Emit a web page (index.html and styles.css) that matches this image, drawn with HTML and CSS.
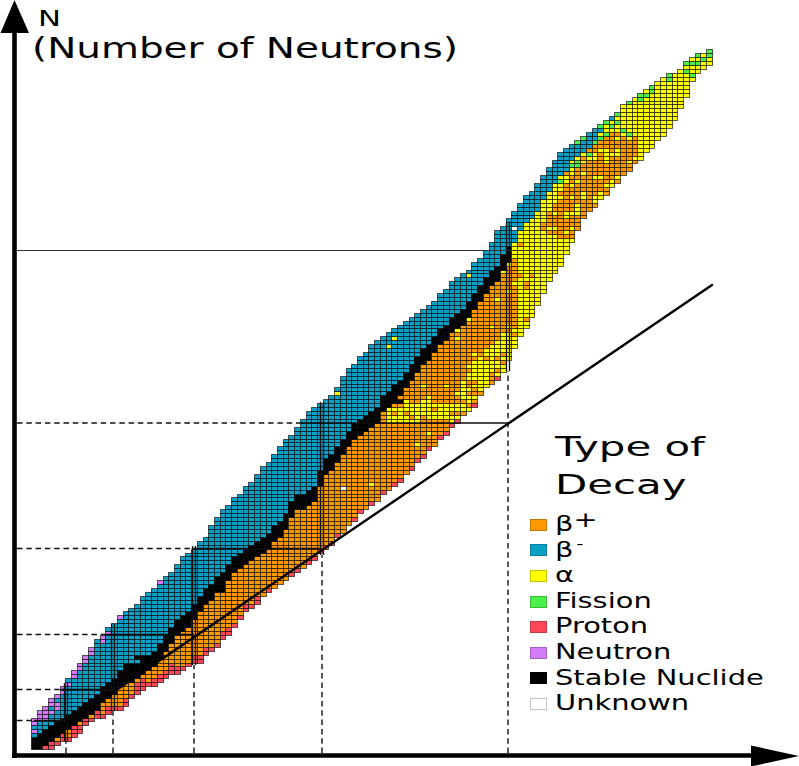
FILE: index.html
```html
<!DOCTYPE html>
<html lang="en">
<head>
<meta charset="utf-8">
<title>Chart of nuclides – Type of Decay</title>
<link rel="stylesheet" href="styles.css">
</head>
<body>
<div class="figure">
  <svg class="chart" width="799" height="766" viewBox="0 0 799 766">
    <g id="cells"></g>

    <g class="magic">
      <line class="dash" x1="66" y1="753" x2="66" y2="741"/>
      <line class="solid" x1="64.5" y1="741" x2="64.5" y2="683"/>
      <line class="solid" x1="67.5" y1="741" x2="67.5" y2="683"/>
      <line class="dash" x1="113" y1="753" x2="113" y2="711"/>
      <line class="solid" x1="111.5" y1="711" x2="111.5" y2="624"/>
      <line class="solid" x1="114.5" y1="711" x2="114.5" y2="624"/>
      <line class="dash" x1="194" y1="753" x2="194" y2="665"/>
      <line class="solid" x1="192.5" y1="665" x2="192.5" y2="546"/>
      <line class="solid" x1="195.5" y1="665" x2="195.5" y2="546"/>
      <line class="dash" x1="322" y1="753" x2="322" y2="555"/>
      <line class="solid" x1="320.5" y1="555" x2="320.5" y2="402"/>
      <line class="solid" x1="323.5" y1="555" x2="323.5" y2="402"/>
      <line class="dash" x1="508" y1="753" x2="508" y2="371"/>
      <line class="solid" x1="506.5" y1="371" x2="506.5" y2="222"/>
      <line class="solid" x1="509.5" y1="371" x2="509.5" y2="222"/>

      <line class="dash" x1="17" y1="720.5" x2="34" y2="720.5"/>
      <line class="solid" x1="34" y1="720.5" x2="66" y2="720.5"/>
      <line class="dash" x1="17" y1="689.5" x2="61" y2="689.5"/>
      <line class="solid" x1="61" y1="689.5" x2="113" y2="689.5"/>
      <line class="dash" x1="17" y1="634.5" x2="103" y2="634.5"/>
      <line class="solid" x1="103" y1="634.5" x2="194" y2="634.5"/>
      <line class="dash" x1="17" y1="548.5" x2="193" y2="548.5"/>
      <line class="solid" x1="193" y1="548.5" x2="322" y2="548.5"/>
      <line class="dash" x1="17" y1="423" x2="301" y2="423"/>
      <line class="solid" x1="301" y1="423" x2="508" y2="423"/>
      <line class="thin" x1="17" y1="250.5" x2="568" y2="250.5"/>
    </g>

    <line class="diag" x1="34" y1="746" x2="712" y2="285"/>

    <line class="axis" x1="14.5" y1="30" x2="14.5" y2="758"/>
    <polygon class="arrow" points="0.5,33 14.5,0 29,33"/>
    <line class="axis" x1="12" y1="755.5" x2="754" y2="755.5"/>
    <polygon class="arrow" points="751,745.5 799,756 751,766.5"/>

    <text class="axis-n" x="38" y="26" textLength="23" lengthAdjust="spacingAndGlyphs">N</text>
    <text class="axis-title" x="32" y="57.5" textLength="426" lengthAdjust="spacingAndGlyphs">(Number of Neutrons)</text>
  </svg>

  <div class="legend">
    <div class="legend-title">
      <span class="title-line">Type of</span>
      <span class="title-line">Decay</span>
    </div>
    <ul class="legend-list">
      <li class="legend-item"><i class="swatch sw-bplus"></i><span class="label">β<span class="sup-plus">+</span></span></li>
      <li class="legend-item"><i class="swatch sw-bminus"></i><span class="label">β<span class="sup-minus">-</span></span></li>
      <li class="legend-item"><i class="swatch sw-alpha"></i><span class="label">α</span></li>
      <li class="legend-item"><i class="swatch sw-fission"></i><span class="label">Fission</span></li>
      <li class="legend-item"><i class="swatch sw-proton"></i><span class="label">Proton</span></li>
      <li class="legend-item"><i class="swatch sw-neutron"></i><span class="label">Neutron</span></li>
      <li class="legend-item"><i class="swatch sw-stable"></i><span class="label">Stable Nuclide</span></li>
      <li class="legend-item"><i class="swatch sw-unknown"></i><span class="label">Unknown</span></li>
    </ul>
  </div>
</div>
<script src="script.js"></script>
</body>
</html>
```

FILE: styles.css
```css
html, body {
  margin: 0;
  padding: 0;
  background: #ffffff;
}

body {
  width: 799px;
  height: 766px;
  overflow: hidden;
  font-family: "DejaVu Sans", "Liberation Sans", sans-serif;
  color: #000;
}

.figure {
  position: relative;
  width: 799px;
  height: 766px;
}

.chart {
  display: block;
}

.cell {
  stroke: rgba(0, 0, 0, 0.62);
  stroke-width: 1;
}

.dash {
  stroke: #111;
  stroke-width: 1.4;
  stroke-dasharray: 5.5 3.8;
}

.solid {
  stroke: #0d0d0d;
  stroke-width: 1.3;
}

.thin {
  stroke: #333;
  stroke-width: 1.1;
}

.diag {
  stroke: #000;
  stroke-width: 2.4;
  stroke-linecap: round;
}

.axis {
  stroke: #000;
  stroke-width: 4.6;
}

.arrow {
  fill: #000;
}

.axis-n {
  font-family: "DejaVu Sans", sans-serif;
  font-size: 22px;
  fill: #000;
}

.axis-title {
  font-family: "DejaVu Sans", sans-serif;
  font-size: 27.5px;
  fill: #000;
}

/* legend */
.legend {
  position: absolute;
  left: 530px;
  top: 428px;
}

.legend-title {
  display: flex;
  flex-direction: column;
  align-items: flex-start;
  padding-left: 25px;
}

.title-line {
  display: inline-block;
  font-size: 26.5px;
  line-height: 38px;
  white-space: nowrap;
  transform: scaleX(1.58);
  transform-origin: 0 50%;
}

.legend-list {
  list-style: none;
  margin: 8px 0 0;
  padding: 0;
  display: flex;
  flex-direction: column;
}

.legend-item {
  display: flex;
  align-items: center;
  height: 25.6px;
}

.swatch {
  display: block;
  width: 17px;
  height: 12px;
  box-sizing: border-box;
  border: 1px solid rgba(0, 0, 0, 0.22);
  margin-right: 8px;
  flex: none;
}

.sw-bplus { background: #ff9900; }
.sw-bminus { background: #0aa0c8; }
.sw-alpha { background: #ffff00; }
.sw-fission { background: #4cf04c; }
.sw-proton { background: #ff4757; }
.sw-neutron { background: #d47cf7; }
.sw-stable { background: #000000; border-color: #000; }
.sw-unknown { background: #ffffff; border-color: #c4c4c4; }

.label {
  display: inline-block;
  font-size: 20.5px;
  line-height: 25.6px;
  white-space: nowrap;
  transform: scaleX(1.41);
  transform-origin: 0 50%;
}

.sup-plus {
  vertical-align: 4.5px;
  line-height: 0;
}

.sup-minus {
  font-size: 14px;
  vertical-align: 8px;
  line-height: 0;
  margin-left: 2px;
}
```

FILE: script.js
```js
(function () {
  var NS = 'http://www.w3.org/2000/svg';
  var layer = document.getElementById('cells');
  var CW = 5.72, CH = 3.93, X0 = 31, Y0 = 749, COLS = 119;
  var COL = { B: '#0aa0c8', O: '#ff9900', Y: '#ffff00', G: '#4cf04c', R: '#ff4757', P: '#d47cf7', K: '#000000', W: '#ffffff' };

  var topPts = [[30,735],[35,713],[53,697],[60,688],[73,672],[87,652],[98,638],[112,625],[123,613],[137,603],[157,583],[173,570],[187,553],[197,545],[207,533],[220,512],[243,490],[267,462],[280,448],[302,418],[320,403],[327,400],[350,367],[370,347],[397,327],[420,310],[437,297],[453,280],[470,267],[487,250],[493,237],[510,217],[523,200],[560,153],[577,140],[593,127],[610,117],[627,103],[647,90],[660,80],[677,70],[697,53],[712,50]];
  var botPts = [[30,749],[47,749],[67,741],[97,718],[117,710],[147,688],[167,677],[197,663],[227,637],[248,610],[273,587],[295,572],[317,557],[337,537],[353,520],[367,510],[377,500],[400,480],[423,457],[437,443],[450,428],[458,420],[473,407],[480,397],[487,387],[497,380],[507,367],[512,350],[523,333],[540,300],[550,280],[560,267],[570,247],[583,217],[600,200],[627,173],[647,150],[667,133],[685,100],[693,77],[712,65]];
  var stabPts = [[33,744],[67,722],[90,705],[113,683],[127,673],[150,660],[160,647],[173,630],[187,617],[197,605],[213,587],[237,560],[257,547],[277,530],[297,500],[313,493],[323,467],[337,453],[350,433],[373,417],[387,397],[407,377],[420,357],[437,340],[453,320],[467,310],[477,293],[500,267],[508,250]];
  var blob = [[538,228],[552,205],[572,172],[594,142],[612,128],[636,138],[634,172],[616,200],[592,222],[566,240]];
  var yel = [[383,420],[392,398],[420,400],[452,404],[466,372],[482,352],[500,336],[514,318],[520,345],[508,372],[492,390],[472,410],[456,421],[422,420],[400,424]];
  var nbPts = [[508,9],[530,7],[560,6],[590,4],[605,2],[616,1],[622,0]];
  var blackRuns = [[123,143,665],[133,150,657],[210,224,588],[297,313,500],[390,403,392],[390,403,400]];
  var whiteCells = [[345,489],[512,228]];

  function interp(p, x) {
    if (x <= p[0][0]) return p[0][1];
    for (var k = 1; k < p.length; k++) {
      if (x <= p[k][0]) {
        var a = p[k - 1], b = p[k];
        return a[1] + (b[1] - a[1]) * (x - a[0]) / (b[0] - a[0]);
      }
    }
    return p[p.length - 1][1];
  }

  function inPoly(p, x, y) {
    var inside = false;
    for (var a = 0, b = p.length - 1; a < p.length; b = a++) {
      var xi = p[a][0], yi = p[a][1], xj = p[b][0], yj = p[b][1];
      if (((yi > y) !== (yj > y)) && (x < (xj - xi) * (y - yi) / (yj - yi) + xi)) inside = !inside;
    }
    return inside;
  }

  function rnd(i, j, s) {
    var h = Math.imul(i + 11, 73856093) ^ Math.imul(j + 7, 19349663) ^ Math.imul(s + 3, 83492791);
    h = Math.imul(h ^ (h >>> 15), 2246822519);
    h = Math.imul(h ^ (h >>> 13), 3266489917);
    h ^= h >>> 16;
    return (h >>> 0) / 4294967296;
  }

  function pick(i, j, xc, yc, jTop, jBot, sLo, sHi, heavy) {
    var r = rnd(i, j, 1), r2 = rnd(i, j, 2);
    var ft = jTop - j, fb = j - jBot;
    for (var w = 0; w < whiteCells.length; w++) {
      if (Math.abs(xc - whiteCells[w][0]) < 2.9 && Math.abs(yc - whiteCells[w][1]) < 2) return 'W';
    }
    if (!heavy) {
      if (j >= sLo && j <= sHi) return 'K';
      for (var b = 0; b < blackRuns.length; b++) {
        var br = blackRuns[b];
        if (xc >= br[0] && xc <= br[1] && Math.abs(yc - br[2]) < 2) return 'K';
      }
      if (j > sHi) {
        if (xc < 60 && ft <= 3 && r < 0.7) return 'P';
        if (xc < 112 && ft <= 1 && r < 0.75) return 'P';
        if (xc < 160 && ft === 0 && r < 0.4) return 'P';
        if (xc > 330 && r2 < 0.012) return 'Y';
        return 'B';
      }
      if (xc < 262) {
        if (fb === 0) return 'R';
        if (fb === 1 && r < (xc < 215 ? 0.75 : 0.5)) return 'R';
        if (fb === 2 && xc < 180 && r < 0.3) return 'R';
      } else if (fb === 0 && r < (xc < 380 ? 0.5 : 0.55)) {
        return 'R';
      }
      if (xc > 380 && inPoly(yel, xc, yc) && r2 < 0.8) return 'Y';
      if (xc > 440 && j === sLo - 1 && r2 < 0.35) return 'Y';
      if (xc > 370 && r2 < 0.04) return 'Y';
      return 'O';
    }
    var nb = Math.round(interp(nbPts, xc));
    if (ft < nb) {
      if (xc > 575 && ft === 0 && r < 0.45) return 'G';
      if (ft === nb - 1 && r < 0.3) return 'Y';
      return 'B';
    }
    if (xc > 575 && ft < nb + 2 && r < 0.45) return 'G';
    if (xc < 520 && yc > 256 && fb >= 3) return r2 < 0.12 ? 'Y' : 'O';
    if (inPoly(blob, xc, yc)) return r2 < 0.78 ? 'O' : 'Y';
    if (xc > 560 && r < 0.07) return 'G';
    if (xc < 660 && r2 < 0.035) return 'O';
    return 'Y';
  }

  var frag = document.createDocumentFragment();
  for (var i = 0; i < COLS; i++) {
    var xl = X0 + i * CW, xc = xl + CW / 2;
    var xa = Math.round(xl), xb = Math.round(xl + CW);
    var jTop = Math.round((Y0 - interp(topPts, xc)) / CH) - 1;
    var jBot = Math.max(0, Math.round((Y0 - interp(botPts, xc)) / CH));
    if (jTop < jBot) jTop = jBot;
    var heavy = xc > 509;
    var sLo = -10, sHi = -20;
    if (!heavy) {
      var js = Math.round((Y0 - interp(stabPts, xc)) / CH - 0.5);
      sLo = js - 2;
      sHi = js + 1;
    }
    for (var j = jBot; j <= jTop; j++) {
      var yt = Y0 - (j + 1) * CH, yc = yt + CH / 2;
      var ya = Math.round(yt), yb = Math.round(Y0 - j * CH);
      var c = pick(i, j, xc, yc, jTop, jBot, sLo, sHi, heavy);
      var rect = document.createElementNS(NS, 'rect');
      rect.setAttribute('x', xa + 0.5);
      rect.setAttribute('y', ya + 0.5);
      rect.setAttribute('width', xb - xa);
      rect.setAttribute('height', yb - ya);
      rect.setAttribute('fill', COL[c]);
      rect.setAttribute('class', 'cell');
      frag.appendChild(rect);
    }
  }
  layer.appendChild(frag);
})();
```
